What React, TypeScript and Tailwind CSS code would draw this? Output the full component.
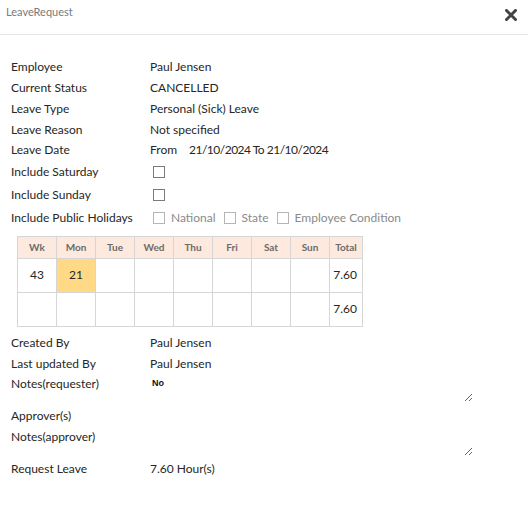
import React from "react";

// Read-only leave request dialog
const font = { fontFamily: '"Segoe UI", Lato, "Noto Sans", sans-serif' };

const Row = ({ label, children, h = "h-[20.75px]" }: { label: string; children?: React.ReactNode; h?: string }) => (
  <div className={`flex items-center ${h}`}>
    <div className="w-[139px] shrink-0">{label}</div>
    <div className="flex items-center">{children}</div>
  </div>
);

const Box = ({ disabled }: { disabled?: boolean }) => (
  <span
    className={`inline-block w-[12px] h-[12px] border bg-white ${
      disabled ? "border-[#b5b5b5]" : "border-[#7a7a7a]"
    }`}
  />
);

const days = ["Wk", "Mon", "Tue", "Wed", "Thu", "Fri", "Sat", "Sun", "Total"];

export default function App() {
  return (
    <div className="w-[528px] h-[505px] bg-white text-[#262626] text-[12px]" style={font}>
      {/* Header */}
      <div className="flex items-center justify-between h-[35px] border-b border-[#e5e5e5] pl-[6px] pr-[11px]">
        <span className="text-[11px] text-[#7b7b7b] -mt-[10px]" style={{ fontFamily: "Lato, sans-serif" }}>
          LeaveRequest
        </span>
        <svg width="12" height="12" viewBox="0 0 12 12" className="-mt-[4px]">
          <path d="M1.5 1.5 L10.5 10.5 M10.5 1.5 L1.5 10.5" stroke="#444" strokeWidth="3" strokeLinecap="square" />
        </svg>
      </div>

      <div className="pl-[11px] pt-[22px]">
        <Row label="Employee">Paul Jensen</Row>
        <Row label="Current Status">CANCELLED</Row>
        <Row label="Leave Type">Personal (Sick) Leave</Row>
        <Row label="Leave Reason">Not specified</Row>
        <Row label="Leave Date">
          <span className="w-[39px]">From</span>
          <span className="tracking-[-0.5px]">21/10/2024 To 21/10/2024</span>
        </Row>
        <Row label="Include Saturday" h="h-[23px]">
          <span className="pl-[3px] flex"><Box /></span>
        </Row>
        <Row label="Include Sunday" h="h-[23px]">
          <span className="pl-[3px] flex"><Box /></span>
        </Row>
        <Row label="Include Public Holidays" h="h-[23px]">
          <span className="pl-[3px] flex items-center gap-[6px] text-[#8a8a8a]">
            <Box disabled />
            <span className="mr-[2px]">National</span>
            <Box disabled />
            <span className="mr-[2px]">State</span>
            <Box disabled />
            <span>Employee Condition</span>
          </span>
        </Row>

        {/* Week table */}
        <table className="ml-[6px] mt-[6px] border-collapse text-center">
          <thead>
            <tr className="h-[22px] bg-[#fde9dd]">
              {days.map((d) => (
                <th
                  key={d}
                  className={`border border-[#d6d6d6] text-[10px] font-bold text-[#6b6b6b] p-0 ${
                    d === "Total" ? "w-[33px]" : "w-[39px]"
                  }`}
                >
                  {d}
                </th>
              ))}
            </tr>
          </thead>
          <tbody>
            <tr className="h-[34px]">
              <td className="border border-[#d6d6d6]">43</td>
              <td className="border border-[#d6d6d6] bg-[#ffd985]">21</td>
              <td className="border border-[#d6d6d6]" />
              <td className="border border-[#d6d6d6]" />
              <td className="border border-[#d6d6d6]" />
              <td className="border border-[#d6d6d6]" />
              <td className="border border-[#d6d6d6]" />
              <td className="border border-[#d6d6d6]" />
              <td className="border border-[#d6d6d6] text-right pr-[5px]">7.60</td>
            </tr>
            <tr className="h-[34px]">
              {days.slice(0, 8).map((d) => (
                <td key={d} className="border border-[#d6d6d6]" />
              ))}
              <td className="border border-[#d6d6d6] text-right pr-[5px]">7.60</td>
            </tr>
          </tbody>
        </table>

        <div className="mt-[6px]">
          <Row label="Created By" h="h-[20.5px]">Paul Jensen</Row>
          <Row label="Last updated By" h="h-[20.5px]">Paul Jensen</Row>
          <div className="flex h-[31px]">
            <div className="w-[139px] shrink-0 h-[20px] leading-[20px]">Notes(requester)</div>
            <textarea
              readOnly
              defaultValue="No"
              className="block w-[323px] h-[28px] border-0 outline-none pl-[2px] pt-[3px] text-[9px] font-bold text-[#111]"
              style={{ fontFamily: '"Liberation Sans", Arial, sans-serif' }}
            />
          </div>
          <Row label="Approver(s)" h="h-[22px]" />
          <div className="flex h-[32px]">
            <div className="w-[139px] shrink-0 h-[20px] leading-[20px]">Notes(approver)</div>
            <textarea readOnly className="block w-[323px] h-[29px] border-0 outline-none p-[2px] text-[9px]" />
          </div>
          <Row label="Request Leave" h="h-[21px]">7.60 Hour(s)</Row>
        </div>
      </div>
    </div>
  );
}
